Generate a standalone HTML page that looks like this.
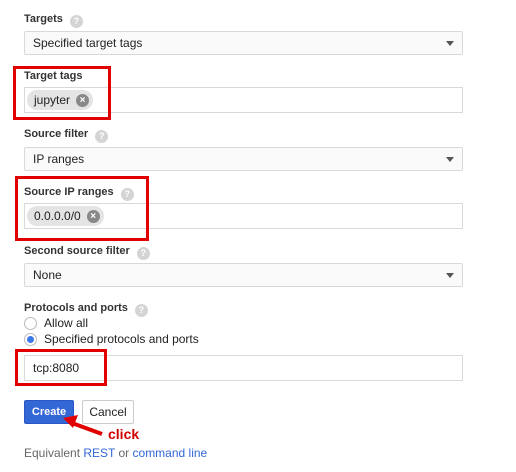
<!DOCTYPE html><html><head><style>
body{margin:0;width:516px;height:472px;background:#fff;font-family:"Liberation Sans",sans-serif;position:relative;overflow:hidden;color:#222}
.a{position:absolute}
.lbl{font-size:11px;font-weight:bold;color:#333}
.h{display:inline-block;width:13px;height:13px;border-radius:50%;background:#d4d4d4;color:#fff;font-size:9px;text-align:center;line-height:13px;margin-left:7px;vertical-align:-2px;font-weight:bold}
.sel{left:24px;width:437px;height:22px;border:1px solid #d9d9d9;border-radius:2px;background:#fafafa;font-size:12px;line-height:22px;box-sizing:content-box}
.sel span{margin-left:8px}
.sel:after{content:"";position:absolute;right:8px;top:9px;border:4px solid transparent;border-top:5px solid #555}
.inp{left:24px;width:437px;height:24px;border:1px solid #d9d9d9;background:#fff}
.chip{position:absolute;left:2px;top:2px;height:20px;border-radius:10px;background:#e4e4e4;font-size:12px;padding:0 4px 0 7px;display:flex;align-items:center}
.x{display:inline-block;width:13px;height:13px;border-radius:50%;background:#888;color:#fff;font-size:10px;line-height:13px;text-align:center;margin-left:6px;font-weight:bold}
.red{border:3px solid #e00000;box-sizing:border-box}
.t{font-size:12px}
</style></head><body>
<div class="a lbl" style="left:24px;top:13px">Targets<span class="h">?</span></div>
<div class="a sel" style="top:31px"><span>Specified target tags</span></div>
<div class="a lbl" style="left:24px;top:70px">Target tags</div>
<div class="a inp" style="top:87px"><div class="chip">jupyter<span class="x">×</span></div></div>
<div class="a red" style="left:13px;top:66px;width:98px;height:54px"></div>
<div class="a lbl" style="left:24px;top:128px">Source filter<span class="h">?</span></div>
<div class="a sel" style="top:147px"><span>IP ranges</span></div>
<div class="a lbl" style="left:24px;top:186px">Source IP ranges<span class="h">?</span></div>
<div class="a inp" style="top:203px"><div class="chip">0.0.0.0/0<span class="x">×</span></div></div>
<div class="a red" style="left:15px;top:176px;width:134px;height:65px"></div>
<div class="a lbl" style="left:24px;top:245px">Second source filter<span class="h">?</span></div>
<div class="a sel" style="top:263px"><span>None</span></div>
<div class="a lbl" style="left:24px;top:302px">Protocols and ports<span class="h">?</span></div>
<div class="a" style="left:24px;top:317px;width:11px;height:11px;border:1px solid #bbb;border-radius:50%"></div>
<div class="a t" style="left:44px;top:316px">Allow all</div>
<div class="a" style="left:24px;top:333px;width:11px;height:11px;border:1px solid #bbb;border-radius:50%;background:#fff"><div style="margin:2px;width:7px;height:7px;border-radius:50%;background:#3b78e7"></div></div>
<div class="a t" style="left:44px;top:332px">Specified protocols and ports</div>
<div class="a inp" style="top:355px"><span class="t" style="position:absolute;left:8px;top:5px">tcp:8080</span></div>
<div class="a red" style="left:15px;top:349px;width:92px;height:37px"></div>
<div class="a" style="left:24px;top:400px;width:50px;height:24px;background:#3367d6;border:1px solid #2a56c6;border-radius:2px;box-sizing:border-box;color:#fff;font-size:11px;font-weight:bold;text-align:center;line-height:22px">Create</div>
<div class="a" style="left:82px;top:400px;width:52px;height:24px;background:#fff;border:1px solid #ccc;border-radius:2px;box-sizing:border-box;font-size:12px;text-align:center;line-height:22px">Cancel</div>
<svg class="a" style="left:0;top:0" width="516" height="472"><path d="M102 434 L72 423" stroke="#e00000" stroke-width="4"/><path d="M63 418 L78 415 L73 428 Z" fill="#e00000"/></svg>
<div class="a" style="left:108px;top:426px;color:#d00000;font-size:14px;font-weight:bold">click</div>
<div class="a t" style="left:24px;top:446px;color:#666">Equivalent <span style="color:#3367d6">REST</span> or <span style="color:#3367d6">command line</span></div>
</body></html>
